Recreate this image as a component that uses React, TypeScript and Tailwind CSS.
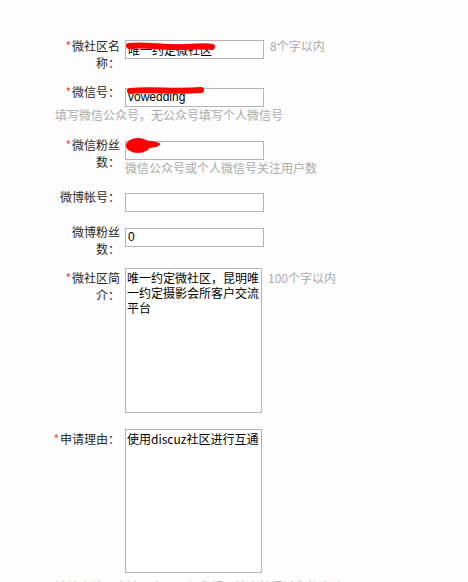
import React from "react";

const font = { fontFamily: '"Noto Sans CJK SC", "Liberation Sans", sans-serif' };

function Label({ lines, required }: { lines: string[]; required?: boolean }) {
  return (
    <div className="mt-[1px] w-[68px] shrink-0 text-right text-[12px] leading-[17px] text-[#2a2a2a]">
      {lines.map((l, i) => (
        <div key={i} className="whitespace-nowrap">
          {i === 0 && required && <span className="mr-[1px] text-[#f03c3c]">*</span>}
          {l}
        </div>
      ))}
    </div>
  );
}

function TextInput({ value, scribble }: { value?: string; scribble?: React.ReactNode }) {
  return (
    <div className="relative ml-[5px] h-[19px] w-[139px] shrink-0">
      <input
        readOnly
        defaultValue={value}
        className="h-full w-full border border-[#b4b4b4] bg-white px-[2px] text-[12px] leading-[17px] text-black outline-none"
        style={{ fontFamily: '"Liberation Sans", "Noto Sans CJK SC", sans-serif' }}
      />
      {scribble && (
        <svg className="pointer-events-none absolute left-0 top-0" width="139" height="19" viewBox="0 0 139 19">
          {scribble}
        </svg>
      )}
    </div>
  );
}

function Hint({ children, className = "" }: { children: React.ReactNode; className?: string }) {
  return <div className={`whitespace-nowrap text-[12px] leading-[17px] text-[#ababab] ${className}`}>{children}</div>;
}

function Area({ value, height, noWrap }: { value: string; height: string; noWrap?: boolean }) {
  return (
    <textarea
      readOnly
      wrap={noWrap ? "off" : "soft"}
      defaultValue={value}
      className={`ml-[5px] ${height} w-[137px] shrink-0 resize-none overflow-hidden border border-[#b4b4b4] bg-white px-[1px] py-[1px] text-[12px] leading-[15px] text-black outline-none`}
      style={font}
    />
  );
}

export default function App() {
  return (
    <div className="min-h-[582px] w-full bg-[#fdfdfd] pl-[52px] pt-[36px]" style={font}>
      {/* 微社区名称 */}
      <div className="flex items-start">
        <Label required lines={["微社区名", "称："]} />
        <TextInput
          value="唯一约定微社区"
          scribble={
            <path
              d="M4 10 C 20 8, 40 12, 60 11 S 82 10, 87 11"
              stroke="#ff0000"
              strokeWidth="6"
              strokeLinecap="round"
              fill="none"
            />
          }
        />
        <Hint className="ml-[6px] leading-[19px]">8个字以内</Hint>
      </div>

      {/* 微信号 */}
      <div className="mt-[11px]">
        <div className="flex items-start">
          <Label required lines={["微信号："]} />
          <TextInput
            value="vowedding"
            scribble={
              <path
                d="M5 9 C 25 7, 50 10, 76 8"
                stroke="#ff0000"
                strokeWidth="6"
                strokeLinecap="round"
                fill="none"
              />
            }
          />
        </div>
        <Hint className="mt-[5px] pl-[3px]">填写微信公众号，无公众号填写个人微信号</Hint>
      </div>

      {/* 微信粉丝数 */}
      <div className="mt-[12px] flex items-start">
        <Label required lines={["微信粉丝", "数："]} />
        <div className="flex flex-col">
          <TextInput
            value=""
            scribble={
              <g fill="#ff0000">
                <ellipse cx="13" cy="10.5" rx="12" ry="7.5" />
                <path d="M12 6 C 20 5, 31 6, 35 8.5 C 36 11, 30 13, 20 13 Z" />
              </g>
            }
          />
          <Hint className="ml-[5px] mt-[5px]">微信公众号或个人微信号关注用户数</Hint>
        </div>
      </div>

      {/* 微博帐号 */}
      <div className="mt-[11px] flex items-start">
        <Label lines={["微博帐号："]} />
        <TextInput />
      </div>

      {/* 微博粉丝数 */}
      <div className="mt-[16px] flex items-start">
        <Label lines={["微博粉丝", "数："]} />
        <TextInput value="0" />
      </div>

      {/* 微社区简介 */}
      <div className="mt-[11px] flex items-start">
        <Label required lines={["微社区简", "介："]} />
        <Area height="h-[145px]" value="唯一约定微社区，昆明唯一约定摄影会所客户交流平台" />
        <Hint className="ml-[6px] leading-[19px]">100个字以内</Hint>
      </div>

      {/* 申请理由 */}
      <div className="mt-[16px] flex items-start">
        <Label required lines={["申请理由："]} />
        <Area height="h-[144px]" noWrap value="使用discuz社区进行互通" />
      </div>

      <Hint className="mt-[5px] pl-[3px]">请认真填写申请理由，以便我们尽快审核通过您的申请</Hint>
    </div>
  );
}
